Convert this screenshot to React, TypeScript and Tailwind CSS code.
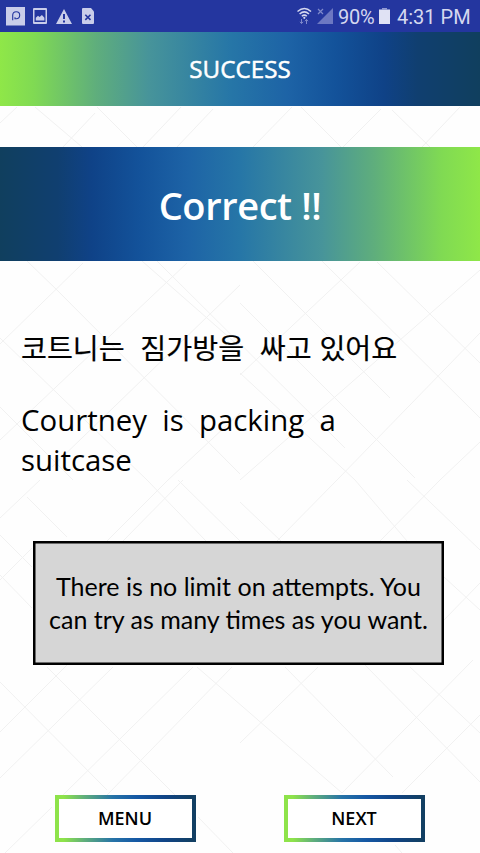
import React from "react";

const LINES: [number, number, number, number][] = [
  [35, 107, 82, 147], [97, 107, 137, 147], [17, 107, 0, 123], [95, 113, 63, 147], [181, 107, 143, 147], [213, 109, 177, 147],
  [292, 107, 253, 147], [301, 107, 341, 147], [381, 109, 343, 147], [392, 110, 430, 147], [460, 107, 422, 147],
  [27, 261, 57, 290], [57, 290, 240, 474], [83, 263, 0, 344], [142, 261, 240, 347], [187, 263, 0, 440],
  [0, 338, 147, 480], [240, 285, 52, 467], [0, 407, 73, 480], [240, 413, 168, 480], [157, 261, 345, 448],
  [253, 261, 390, 398], [322, 261, 480, 418], [377, 262, 480, 363], [360, 262, 240, 375], [480, 270, 240, 480],
  [240, 303, 415, 478], [480, 333, 337, 480], [480, 442, 440, 480], [240, 373, 355, 480],
  [0, 535, 32, 567], [0, 575, 32, 608], [0, 580, 32, 548], [27, 497, 67, 537], [168, 480, 107, 541], [183, 480, 123, 541],
  [147, 480, 206, 541], [178, 480, 240, 541], [40, 480, 0, 518], [337, 480, 277, 541], [240, 502, 281, 541],
  [355, 480, 407, 541], [407, 480, 480, 550], [440, 480, 380, 541], [444, 577, 480, 610], [480, 583, 444, 620],
  [0, 682, 107, 790], [67, 665, 0, 732], [113, 667, 0, 778], [47, 667, 175, 795], [193, 667, 63, 795], [232, 667, 107, 795],
  [197, 667, 342, 793], [52, 807, 5, 853], [198, 817, 233, 853], [285, 667, 393, 777], [365, 665, 480, 782],
  [410, 667, 480, 733], [318, 667, 240, 743], [473, 660, 342, 793], [480, 715, 402, 793], [395, 845, 402, 853],
];

function Backdrop() {
  return (
    <svg className="absolute inset-0 -z-10" width="480" height="853" viewBox="0 0 480 853" stroke="#f1f1f1" strokeWidth="1">
      {LINES.map(([x1, y1, x2, y2], i) => (
        <line key={i} x1={x1} y1={y1} x2={x2} y2={y2} />
      ))}
    </svg>
  );
}

function StatusBar() {
  return (
    <div className="flex h-8 items-center justify-between bg-[#24369f] font-['Roboto',sans-serif] text-[#d5d8ef]">
      <svg width="100" height="32" viewBox="0 0 100 32" fill="#c9cdea">
        <rect x="6" y="7" width="19" height="18.5" />
        <path d="M12.700 20.200v-5.100a3.500 3.500 0 1 1 3.500 3.700h-1.200v-1.600" fill="none" stroke="#24369f" strokeWidth="1.100" />
        <path fillRule="evenodd" d="M34 8h12a1 1 0 0 1 1 1v14a1 1 0 0 1-1 1H34a1 1 0 0 1-1-1V9a1 1 0 0 1 1-1Zm.500 2v12h11V10Z" />
        <path d="M35.800 20.500v-2.800l2.200-1.900 1.600 1.200 2.300-2.100 2.500 2.800v2.800Z" />
        <path d="M64 9 72 24H56Z" strokeLinejoin="round" />
        <path d="M64 14v5M64 20.500v2" stroke="#24369f" strokeWidth="2" />
        <path d="M83 8h8l3 3.500V23a1 1 0 0 1-1 1H83a1 1 0 0 1-1-1V9a1 1 0 0 1 1-1Z" />
        <path d="m85.300 14.700 5.200 5.200m0-5.200-5.200 5.200" stroke="#24369f" strokeWidth="1.600" />
      </svg>
      <div className="flex items-center pr-[10px] text-[20px] leading-8">
        <svg width="42" height="32" viewBox="294 0 42 32" fill="none">
          <g stroke="#d5d8ef" strokeWidth="1.500">
            <path d="M295.500 11.500q7-6 13.500 0M297.600 14q4.800-4.200 9.400 0M299.800 16.300q2.700-2.300 5 0" />
          </g>
          <circle cx="302.300" cy="17.800" r="1.100" fill="#d5d8ef" />
          <path d="M299.500 19v4.500m-1.500-1.700 1.500 1.800 1.500-1.800M304.500 24v-4.500m-1.500 1.700 1.500-1.800 1.500 1.800" stroke="#7f89cb" />
          <path d="M331 8v16h-16Z" fill="#6d78c2" />
          <path d="m316 9 5 5m0-5-5 5" stroke="#7f89cb" strokeWidth="1.200" />
        </svg>
        <span className="mt-[2px] w-[39px] whitespace-nowrap tracking-[-0.2px]">90%</span>
        <svg className="ml-[2px]" width="11" height="32" viewBox="0 0 11 32" fill="#e0e2f4">
          <path d="M0 9.500h11V24H0Z" />
          <path d="M3 8h5v2H3Z" fill="#929ad3" />
        </svg>
        <span className="ml-[7px] mt-[2px] w-[73px] whitespace-nowrap">4:31 PM</span>
      </div>
    </div>
  );
}

function ActionButton({ label }: { label: string }) {
  return (
    <button className="h-[47px] w-[141px] bg-[linear-gradient(90deg,#8ee34a_0%,#8ee34a_6%,#5fae7c_21%,#2673a7_41%,#1558a4_58%,#104486_78%,#123f63_97%)] p-1">
      <span className="flex h-full w-full items-center justify-center bg-white pb-px pr-px text-[18px] font-semibold leading-none">{label}</span>
    </button>
  );
}

export default function App() {
  return (
    <div className="relative isolate flex h-[853px] w-[480px] flex-col overflow-hidden bg-[#fefefe] font-['Open_Sans',sans-serif] text-black">
      <Backdrop />
      <StatusBar />
      <header className="flex h-[74px] items-center justify-center bg-[linear-gradient(90deg,#8fe748_0%,#80da53_7%,#5fae7c_20%,#47949a_31%,#2676a7_48%,#1d63a6_60%,#13529a_70%,#0f4287_80%,#103f70_87%,#103f5e_100%)] text-[24.2px] text-white [-webkit-text-stroke:0.5px_white]">
        SUCCESS
      </header>
      <section className="mt-[41px] flex h-[114px] items-center justify-center bg-[linear-gradient(270deg,#8fe748_0%,#80da53_8%,#5fae7c_22%,#47949a_33%,#2676a7_50%,#1d63a6_61%,#13529a_71%,#0f4287_81%,#103f70_88%,#103f5e_100%)] pt-px text-[38px] font-semibold leading-none tracking-[-0.4px] text-white">
        <span>Correct !!</span>
      </section>
      <main className="flex h-[592px] flex-col">
        <p className="mt-[66px] h-[40px] whitespace-pre pl-[21px] font-['Noto_Sans_CJK_KR',sans-serif] text-[28.2px] leading-[40px] [word-spacing:1.5px] [-webkit-text-stroke:0.2px_black]">{"코트니는  짐가방을  싸고 있어요"}</p>
        <p className="mt-[33px] h-[80px] whitespace-pre pl-[21px] text-[29.4px] leading-[40px]">{"Courtney  is  packing  a\nsuitcase"}</p>
        <div className="ml-[33px] mt-[61px] flex h-[124px] w-[411px] flex-col items-center justify-center border-[2px] border-black bg-[#d6d6d6] font-['Lato',sans-serif] text-[25px] leading-[33px] shadow-[inset_0_0_0_0.5px_black]">
          <span className="whitespace-nowrap">There is no limit on attempts. You</span>
          <span className="whitespace-nowrap">can try as many times as you want.</span>
        </div>
        <nav className="mt-[130px] flex gap-[88px] pl-[55px]">
          <ActionButton label="MENU" />
          <ActionButton label="NEXT" />
        </nav>
      </main>
    </div>
  );
}
